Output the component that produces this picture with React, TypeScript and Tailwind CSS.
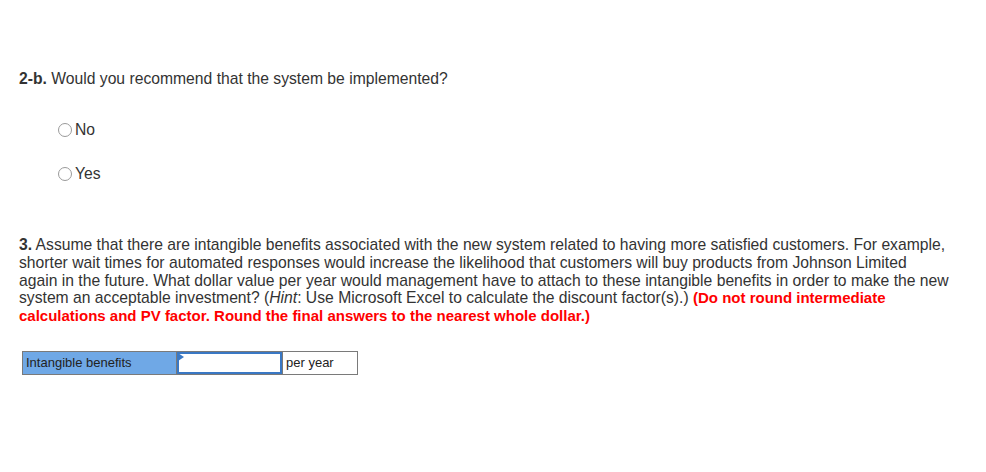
export default function App() {
  return (
    <div className="w-[986px] h-[472px] bg-white text-[#333] font-['Liberation_Sans',Arial,sans-serif]">
      <div className="pt-[69px] pl-[19px] pr-[10px]">
        {/* Part 2-b */}
        <p className="text-[15.7px] leading-[19px] whitespace-nowrap">
          <span className="font-bold">2-b.</span> Would you recommend that the system be implemented?
        </p>

        <div className="pl-[39px] mt-[33px] flex flex-col gap-[26px]">
          <label className="flex items-center gap-[3px] text-[15.7px] leading-[18px]">
            <span className="w-[14px] h-[14px] rounded-full border border-[#9a9a9a] bg-white"></span>
            No
          </label>
          <label className="flex items-center gap-[3px] text-[15.7px] leading-[18px]">
            <span className="w-[14px] h-[14px] rounded-full border border-[#9a9a9a] bg-white"></span>
            Yes
          </label>
        </div>

        {/* Part 3 */}
        <p className="mt-[53px] text-[15.7px] leading-[17.8px] whitespace-nowrap">
          <span className="font-bold">3.</span> Assume that there are intangible benefits associated with the new system related to having more satisfied customers. For example,
          <br />
          shorter wait times for automated responses would increase the likelihood that customers will buy products from Johnson Limited
          <br />
          again in the future. What dollar value per year would management have to attach to these intangible benefits in order to make the new
          <br />
          system an acceptable investment? (<i>Hint</i>: Use Microsoft Excel to calculate the discount factor(s).){" "}
          <span className="font-bold text-[15px] text-[#ff0000]">(Do not round intermediate</span>
          <br />
          <span className="font-bold text-[15px] text-[#ff0000]">calculations and PV factor. Round the final answers to the nearest whole dollar.)</span>
        </p>

        {/* Answer table */}
        <div className="mt-[26px] ml-[3px] flex h-[24px] text-[13px] text-[#222]">
          <div className="w-[155px] bg-[#6fa8e6] border border-[#7a7a7a] px-[3px] flex items-center">
            Intangible benefits
          </div>
          <div className="relative w-[105px] border-y border-[#7a7a7a] flex">
            <div className="flex-1 border-2 border-[#3a78c4] bg-white"></div>
            <svg className="absolute left-[1px] top-[1px]" width="6" height="8" viewBox="0 0 6 8">
              <path d="M0 0 L6 4 L0 8 Z" fill="#3a78c4" />
            </svg>
          </div>
          <div className="w-[76px] border border-[#7a7a7a] bg-white px-[3px] flex items-center">
            per year
          </div>
        </div>
      </div>
    </div>
  );
}
